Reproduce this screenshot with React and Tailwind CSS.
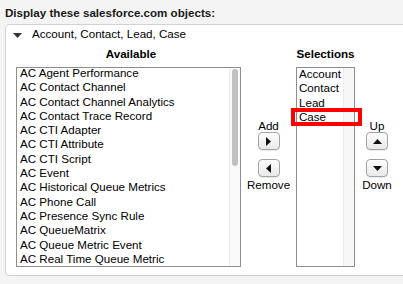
import React from "react";

const available = [
  "AC Agent Performance",
  "AC Contact Channel",
  "AC Contact Channel Analytics",
  "AC Contact Trace Record",
  "AC CTI Adapter",
  "AC CTI Attribute",
  "AC CTI Script",
  "AC Event",
  "AC Historical Queue Metrics",
  "AC Phone Call",
  "AC Presence Sync Rule",
  "AC QueueMatrix",
  "AC Queue Metric Event",
  "AC Real Time Queue Metric",
];

const selections = ["Account", "Contact", "Lead", "Case"];

function Arrow({ dir }) {
  const paths = {
    right: "M2 0 L7 4.5 L2 9 Z",
    left: "M7 0 L2 4.5 L7 9 Z",
    up: "M0 7 L4.5 2 L9 7 Z",
    down: "M0 2 L4.5 7 L9 2 Z",
  };
  return (
    <svg width="9" height="9" viewBox="0 0 9 9">
      <path d={paths[dir]} fill="#111" />
    </svg>
  );
}

function MoveButton({ dir }) {
  return (
    <button className="w-[22px] h-[18px] rounded-[4px] border border-[#a3a3a3] bg-gradient-to-b from-white to-[#e9e9e9] flex items-center justify-center shadow-[0_1px_0_rgba(0,0,0,0.08)]">
      <Arrow dir={dir} />
    </button>
  );
}

export default function App() {
  return (
    <div
      className="w-[403px] h-[284px] overflow-hidden bg-[#f4f4f4] text-black text-[11.6px]"
      style={{ fontFamily: '"Liberation Sans", Arial, sans-serif' }}
    >
      <div className="pl-[5px] pt-[6px] h-[24px] font-bold leading-[14px] text-[#1a1a1a]">
        Display these salesforce.com objects:
      </div>

      <div className="ml-[5px] w-[420px] h-[252px] border border-[#d2d2d2] rounded-tl-[4px] rounded-bl-[4px] bg-white">
        {/* section toggle */}
        <div className="pt-[2px] pl-[7px] flex items-center h-[16px] leading-[14px]">
          <svg width="9" height="5" viewBox="0 0 9 5" className="mt-[2px]">
            <path d="M0 0 L9 0 L4.5 5 Z" fill="#333" />
          </svg>
          <span className="ml-[10px]">Account, Contact, Lead, Case</span>
        </div>

        <div className="mt-[6px] pl-[10px] flex items-start">
          {/* Available */}
          <div className="flex flex-col items-center w-[225px]">
            <div className="font-bold leading-[14px] h-[14px] pl-[5px]">Available</div>
            <div className="mt-[6px] w-[225px] h-[200px] border border-[#8e8e8e] flex bg-white overflow-hidden">
              <div className="flex-1 -mt-[2px] pl-[3px] leading-[14.3px] whitespace-nowrap overflow-hidden">
                {available.map((item) => (
                  <div key={item}>{item}</div>
                ))}
              </div>
              <div className="w-[11px] h-full bg-[#fafafa] border-l border-[#ebebeb] pt-[1px] flex justify-center">
                <div className="w-[6px] h-[97px] rounded-full bg-[#c1c1c1]" />
              </div>
            </div>
          </div>

          {/* Add / Remove */}
          <div className="w-[55px] pt-[72px] flex flex-col items-center">
            <div className="leading-[13px] h-[13px]">Add</div>
            <MoveButton dir="right" />
            <div className="mt-[9px]">
              <MoveButton dir="left" />
            </div>
            <div className="mt-[1px] leading-[13px]">Remove</div>
          </div>

          {/* Selections */}
          <div className="flex flex-col items-center w-[59px]">
            <div className="font-bold leading-[14px] h-[14px] whitespace-nowrap">Selections</div>
            <div className="relative mt-[6px] w-[59px] h-[200px] border border-[#8e8e8e] flex bg-white">
              <div className="flex-1 -mt-[1px] pl-[2px] leading-[14.3px] whitespace-nowrap">
                {selections.map((item) => (
                  <div key={item}>{item}</div>
                ))}
              </div>
              <div className="w-[11px] h-full bg-[#f7f7f7] border-l border-[#ececec]" />
              <div className="absolute left-[-6px] top-[40px] w-[71px] h-[18px] border-[4px] border-[#ff0000]" />
            </div>
          </div>

          {/* Up / Down */}
          <div className="w-[44px] pt-[72px] flex flex-col items-center">
            <div className="leading-[13px] h-[13px]">Up</div>
            <MoveButton dir="up" />
            <div className="mt-[9px]">
              <MoveButton dir="down" />
            </div>
            <div className="mt-[1px] leading-[13px]">Down</div>
          </div>
        </div>
      </div>
    </div>
  );
}
